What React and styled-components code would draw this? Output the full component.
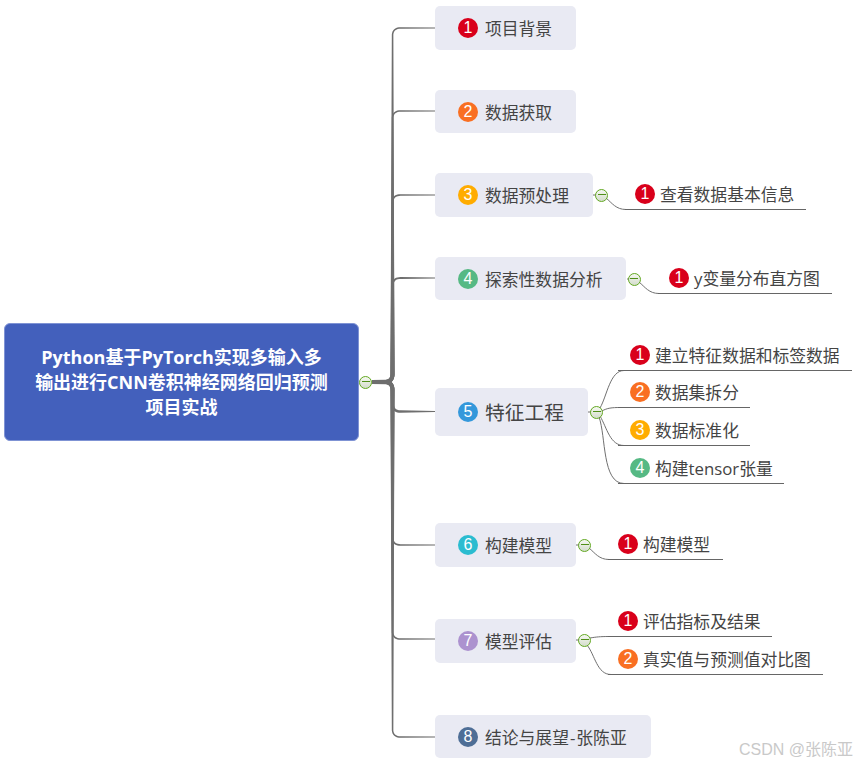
import React from 'react'
import styled, { createGlobalStyle } from 'styled-components'

const GlobalStyle = createGlobalStyle`
  html, body {
    margin: 0;
    padding: 0;
    background: #fff;
  }
`

const BADGE_COLORS = {
  1: '#d9001b',
  2: '#f96f22',
  3: '#ffac00',
  4: '#56b984',
  5: '#3498db',
  6: '#2bbcd0',
  7: '#ac92cf',
  8: '#4e6e96',
}

const FONT = `'Open Sans', 'Noto Sans CJK SC', sans-serif`

const Canvas = styled.div`
  position: relative;
  width: 856px;
  height: 765px;
  overflow: hidden;
  background: #fff;
  font-family: ${FONT};
`

const Wires = styled.svg`
  position: absolute;
  top: 0;
  left: 0;
`

const RootTopic = styled.div`
  position: absolute;
  left: 4px;
  top: 323px;
  width: 355px;
  height: 118px;
  box-sizing: border-box;
  padding: 0 28px;
  display: flex;
  align-items: center;
  justify-content: center;
  text-align: center;
  background: #4360bc;
  border: 1px solid #7f93d4;
  border-radius: 6px;
  color: #fff;
  font-size: 18px;
  font-weight: 700;
  line-height: 25px;
`

const MainTopic = styled.div`
  position: absolute;
  left: 435px;
  top: ${(p) => p.$top}px;
  height: ${(p) => p.$height}px;
  box-sizing: border-box;
  padding: 0 24px 0 23px;
  display: flex;
  align-items: center;
  gap: 7px;
  background: #e9eaf3;
  border-radius: 5px;
  color: #444;
  font-size: ${(p) => p.$size}px;
  white-space: nowrap;
`

const Label = styled.span`
  position: relative;
  top: ${(p) => p.$nudge || 0}px;
`

const Dash = styled.span`
  margin: 0 1px;
`

const SubTopic = styled.div`
  position: absolute;
  left: ${(p) => p.$left}px;
  top: ${(p) => p.$line - 29}px;
  width: ${(p) => p.$right - p.$left}px;
  height: 30px;
  box-sizing: border-box;
  padding: 0 0 2px ${(p) => p.$inset}px;
  display: flex;
  align-items: center;
  gap: 5px;
  border-bottom: 1px solid #666;
  color: #444;
  font-size: 16.8px;
  white-space: nowrap;
`

const Badge = styled.span`
  flex: none;
  width: 20px;
  height: 20px;
  border-radius: 50%;
  display: flex;
  align-items: center;
  justify-content: center;
  background: ${(p) => BADGE_COLORS[p.$n]};
  color: #fff;
  font-family: 'Liberation Sans', sans-serif;
  font-size: 16px;
  line-height: 1;
`

const Toggle = styled.span`
  position: absolute;
  left: ${(p) => p.$x - 6.5}px;
  top: ${(p) => p.$y - 6.5}px;
  width: 13px;
  height: 13px;
  box-sizing: border-box;
  border: 1px solid #62a821;
  border-radius: 50%;
  background: linear-gradient(#f6f8f2, #d3dccb);

  &::after {
    content: '';
    position: absolute;
    left: 1.5px;
    right: 1.5px;
    top: 4.5px;
    height: 1px;
    background: #4f8f17;
  }
`

const Watermark = styled.div`
  position: absolute;
  right: 3px;
  top: 739px;
  color: #c9c9c9;
  font-family: 'Liberation Sans', 'Noto Sans CJK SC', sans-serif;
  font-size: 16px;
  line-height: 22px;
  white-space: nowrap;
`

const topics = [
  { n: 1, label: '项目背景', top: 6, height: 44, size: 16.8 },
  { n: 2, label: '数据获取', top: 90, height: 43, size: 16.8 },
  { n: 3, label: '数据预处理', top: 173, height: 44, size: 16.8 },
  { n: 4, label: '探索性数据分析', top: 257, height: 43, size: 16.8 },
  { n: 5, label: '特征工程', top: 388, height: 48, size: 19.8, nudge: -1 },
  { n: 6, label: '构建模型', top: 523, height: 44, size: 16.8 },
  { n: 7, label: '模型评估', top: 619, height: 44, size: 16.8 },
  {
    n: 8,
    label: (
      <>
        结论与展望<Dash>-</Dash>张陈亚
      </>
    ),
    top: 715,
    height: 43,
    size: 16.8,
  },
]

const subTopics = [
  { n: 1, label: '查看数据基本信息', left: 625, right: 806, line: 209, inset: 10 },
  { n: 1, label: 'y变量分布直方图', left: 658, right: 832, line: 293, inset: 11 },
  { n: 1, label: '建立特征数据和标签数据', left: 618, right: 852, line: 370, inset: 12 },
  { n: 2, label: '数据集拆分', left: 618, right: 750, line: 407, inset: 12 },
  { n: 3, label: '数据标准化', left: 618, right: 750, line: 445, inset: 12 },
  { n: 4, label: '构建tensor张量', left: 618, right: 784, line: 483, inset: 12 },
  { n: 1, label: '构建模型', left: 608, right: 723, line: 559, inset: 10 },
  { n: 1, label: '评估指标及结果', left: 608, right: 772, line: 636, inset: 10 },
  { n: 2, label: '真实值与预测值对比图', left: 608, right: 823, line: 674, inset: 10 },
]

const toggles = [
  [365.5, 382],
  [601.5, 195],
  [634, 279],
  [596.5, 412],
  [584.5, 545],
  [584.5, 640],
]

// curves from a toggle out to the start of the sub topic's underline
const subWires = [
  'M593 195H596M606 198C612 203 616 209.5 626 209.5',
  'M627 279H629M639 282C645 287 649 293.5 659 293.5',
  'M588 412H591M600 408C607 396 610 370.5 624 370.5',
  'M602 411C607 408 612 407.5 620 407.5',
  'M600 416C607 428 610 445.5 624 445.5',
  'M599 417C606 436 602 483.5 624 483.5',
  'M576 545H579M589 548C595 553 599 559.5 609 559.5',
  'M576 640H579M590 638C596 637 600 636.5 609 636.5',
  'M587 645C595 655 597 674.5 611 674.5',
]

// the main branches get thinner from the root outwards, so they are filled shapes
const taperedBranch = (targetY, trunkX = 392.5, radius = 8) => {
  const startY = 382
  const dir = targetY < startY ? -1 : 1
  const pts = [[372, startY]]
  const curve = (p0, c, p1) => {
    for (let i = 1; i <= 10; i++) {
      const t = i / 10
      const u = 1 - t
      pts.push([
        u * u * p0[0] + 2 * u * t * c[0] + t * t * p1[0],
        u * u * p0[1] + 2 * u * t * c[1] + t * t * p1[1],
      ])
    }
  }
  curve([trunkX - radius, startY], [trunkX, startY], [trunkX, startY + dir * radius])
  curve([trunkX, targetY - dir * radius], [trunkX, targetY], [trunkX + radius, targetY])
  pts.push([435, targetY])

  let total = 0
  const lengths = pts.map((p, i) => {
    if (i > 0) total += Math.hypot(p[0] - pts[i - 1][0], p[1] - pts[i - 1][1])
    return total
  })
  const sideA = []
  const sideB = []
  pts.forEach((p, i) => {
    const prev = pts[Math.max(i - 1, 0)]
    const next = pts[Math.min(i + 1, pts.length - 1)]
    const len = Math.hypot(next[0] - prev[0], next[1] - prev[1])
    const nx = -(next[1] - prev[1]) / len
    const ny = (next[0] - prev[0]) / len
    const half = (4.2 - 3 * (lengths[i] / total)) / 2
    sideA.push(`${p[0] + nx * half},${p[1] + ny * half}`)
    sideB.unshift(`${p[0] - nx * half},${p[1] - ny * half}`)
  })
  return [...sideA, ...sideB].join(' ')
}

const branchYs = [28, 111, 195, 278, 411.5, 545, 639, 737]

const App = () => (
  <Canvas>
    <GlobalStyle />
    <Wires width="856" height="765" viewBox="0 0 856 765">
      {branchYs.map((y) => (
        <polygon key={y} points={taperedBranch(y)} fill="#6e6e6e" />
      ))}
      {subWires.map((d) => (
        <path key={d} d={d} fill="none" stroke="#707070" strokeWidth="1" />
      ))}
    </Wires>

    <RootTopic>Python基于PyTorch实现多输入多输出进行CNN卷积神经网络回归预测项目实战</RootTopic>

    {topics.map((t) => (
      <MainTopic key={t.n} $top={t.top} $height={t.height} $size={t.size}>
        <Badge $n={t.n}>{t.n}</Badge>
        <Label $nudge={t.nudge}>{t.label}</Label>
      </MainTopic>
    ))}

    {subTopics.map((s) => (
      <SubTopic key={s.label} $left={s.left} $right={s.right} $line={s.line} $inset={s.inset}>
        <Badge $n={s.n}>{s.n}</Badge>
        {s.label}
      </SubTopic>
    ))}

    {toggles.map(([x, y]) => (
      <Toggle key={`${x}-${y}`} $x={x} $y={y} />
    ))}

    <Watermark>CSDN @张陈亚</Watermark>
  </Canvas>
)

export default App
